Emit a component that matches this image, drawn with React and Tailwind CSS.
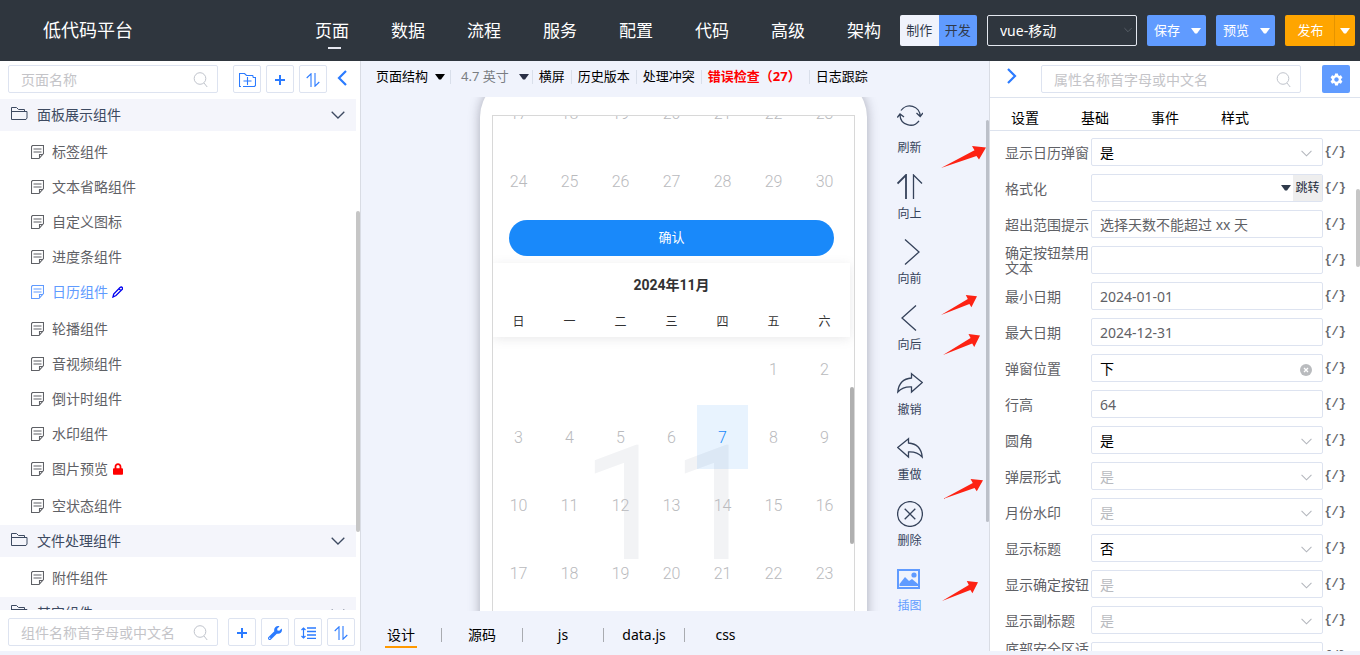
import clsx from 'clsx'
import { FaLock, FaWrench } from 'react-icons/fa'
import { MdSettings } from 'react-icons/md'

const NAV = ['页面', '数据', '流程', '服务', '配置', '代码', '高级', '架构']

const COMPONENT_GROUPS = [
  {
    title: '面板展示组件',
    items: [
      { name: '标签组件' },
      { name: '文本省略组件' },
      { name: '自定义图标' },
      { name: '进度条组件' },
      { name: '日历组件', active: true, mark: 'edit' },
      { name: '轮播组件' },
      { name: '音视频组件' },
      { name: '倒计时组件' },
      { name: '水印组件' },
      { name: '图片预览', mark: 'lock' },
      { name: '空状态组件' },
    ],
  },
  { title: '文件处理组件', items: [{ name: '附件组件' }] },
  { title: '其它组件', items: [] },
]

const WEEKDAYS = ['日', '一', '二', '三', '四', '五', '六']
const PREV_DAYS = [17, 18, 19, 20, 21, 22, 23, 24, 25, 26, 27, 28, 29, 30]
const MONTH_DAYS = [null, null, null, null, null, ...Array.from({ length: 30 }, (_, i) => i + 1)]

const PROPS = [
  { label: '显示日历弹窗', type: 'select', value: '是' },
  { label: '格式化', type: 'jump', value: '' },
  { label: '超出范围提示', type: 'text', value: '选择天数不能超过 xx 天' },
  { label: '确定按钮禁用文本', type: 'text', value: '' },
  { label: '最小日期', type: 'text', value: '2024-01-01' },
  { label: '最大日期', type: 'text', value: '2024-12-31' },
  { label: '弹窗位置', type: 'clear', value: '下' },
  { label: '行高', type: 'text', value: '64' },
  { label: '圆角', type: 'select', value: '是' },
  { label: '弹层形式', type: 'select', value: '是', muted: true },
  { label: '月份水印', type: 'select', value: '是', muted: true },
  { label: '显示标题', type: 'select', value: '否' },
  { label: '显示确定按钮', type: 'select', value: '是', muted: true },
  { label: '显示副标题', type: 'select', value: '是', muted: true },
  { label: '底部安全区适配', type: 'select', value: '是', muted: true },
]

function Caret({ className }) {
  return (
    <svg viewBox="0 0 10 6" className={clsx('h-[6px] w-[10px] shrink-0', className)} fill="currentColor">
      <path d="M0 0h10L6 5.6H4z" />
    </svg>
  )
}

function ChevronDown({ className }) {
  return (
    <svg viewBox="0 0 14 8" className={className} fill="none" stroke="currentColor" strokeWidth="1.3">
      <path d="M.7.7 7 7 13.3.7" />
    </svg>
  )
}

function SearchIcon() {
  return (
    <svg
      viewBox="0 0 16 16"
      className="pointer-events-none absolute top-[7px] right-[9px] size-4 text-[#c0c4cc]"
      fill="none"
      stroke="currentColor"
    >
      <circle cx="7" cy="6.5" r="5.8" />
      <path d="m11 11 3.2 4" />
    </svg>
  )
}

function FolderIcon() {
  return (
    <svg viewBox="0 0 17 14" className="mb-0.5 h-[14px] w-[17px] shrink-0" fill="none" stroke="currentColor">
      <path d="M.5 12.5V.5h5l2 2h6v2M.5 4.5H8M7.5 4.5h8.5v6.5l-1 1.500H.5" />
    </svg>
  )
}

function NoteIcon() {
  return (
    <svg viewBox="0 0 13 14" className="h-[14px] w-[13px] shrink-0" fill="none" stroke="currentColor" strokeWidth="1.1">
      <path d="M1.500.5h11v8l-4.500 5H.5V1.500zM2.500 4h8M2.500 7h8M12 9.500H8.500V13" />
    </svg>
  )
}

function PencilIcon() {
  return (
    <svg viewBox="0 0 11 12" className="ml-1 h-3 w-[11px]" fill="none" stroke="#0000f0" strokeWidth="1.3">
      <path d="M1 11l.7-3L8 1.500q1.500-1 2.300.2T9.500 4L4 9.500zM6.800 2.800l2.400 2" />
    </svg>
  )
}

function SortIcon() {
  return (
    <svg viewBox="0 0 14 14" className="size-[14px]" fill="none" stroke="currentColor" strokeWidth="1.1">
      <path d="M.7 5 5 .8V14M9 0v13.200L13.300 9" />
    </svg>
  )
}

function LineHeightIcon() {
  return (
    <svg viewBox="0 0 15 12" className="h-3 w-[15px]" fill="none" stroke="currentColor" strokeWidth="1.2">
      <path d="M2.500 1v10M.5 3l2-2 2 2M.5 9l2 2 2-2" />
      <path d="M6 1h9M6 4.500h9M6 8h9M6 11.400h9" strokeWidth="1.400" />
    </svg>
  )
}

function PlusIcon() {
  return (
    <svg viewBox="0 0 10 10" className="size-[10px]" stroke="currentColor" strokeWidth="2">
      <path d="M5 0v10M0 5h10" />
    </svg>
  )
}

function FolderPlusIcon() {
  return (
    <svg viewBox="0 0 17 14" className="h-[14px] w-[17px]" fill="none" stroke="currentColor" strokeWidth="1.1">
      <path d="M2 13.500H.5V.5h5l2 2h6.500M16.500 4v8.500l-1 1H4M14 2.500v2M16.500 4.500H14M8.500 4v8M4.500 8h8" />
    </svg>
  )
}

function IconButton({ label, children }) {
  return (
    <button
      type="button"
      aria-label={label}
      className="flex size-7 shrink-0 items-center justify-center rounded-xs border border-[#dde3f0] bg-white pt-0.5 text-[#2b7bff]"
    >
      {children}
    </button>
  )
}

function SearchBox({ placeholder, className }) {
  return (
    <div className={clsx('relative', className)}>
      <input
        type="text"
        aria-label={placeholder}
        placeholder={placeholder}
        className="h-7 w-full rounded-xs border border-[#dde3f0] bg-white pr-8 pl-3 text-[14px] placeholder:text-[#c4c4c8]"
      />
      <SearchIcon />
    </div>
  )
}

function SplitButton({ label }) {
  return (
    <button
      type="button"
      className="flex h-[31px] w-[59px] items-center justify-between rounded-xs bg-[#609bff] pr-[5px] pl-[7px] text-[13px] text-white"
    >
      {label}
      <Caret />
    </button>
  )
}

function Header() {
  return (
    <header className="flex h-[61px] shrink-0 items-center bg-[#2f363e] pr-[5px] text-white">
      <h1 className="w-[315px] shrink-0 pl-[43px] text-[18px]">低代码平台</h1>
      <nav className="flex gap-[42px] text-[17px]">
        {NAV.map((name, i) => (
          <a key={name} href="#" className="relative leading-7 whitespace-nowrap">
            {name}
            {i === 0 && <span className="absolute -bottom-1 left-[13px] h-0.5 w-[13px] bg-[#e6e8f0]" />}
          </a>
        ))}
      </nav>
      <div className="ml-auto flex gap-[10px]">
        <div className="flex h-[31px] w-[77px] overflow-hidden rounded-xs text-[13px] text-[#303a4b]">
          <button type="button" className="flex-1 bg-[#f0f3fc]">
            制作
          </button>
          <button type="button" className="flex-1 bg-[#609bff]">
            开发
          </button>
        </div>
        <div className="relative">
          <select
            aria-label="项目类型"
            className="h-[31px] w-[150px] appearance-none rounded-xs border border-[#e4e8f0] bg-transparent px-3 text-[14px] text-white"
          >
            <option>vue-移动</option>
          </select>
          <ChevronDown className="pointer-events-none absolute top-3 right-[5px] h-[6px] w-2 text-[#666d75]" />
        </div>
        <SplitButton label="保存" />
        <SplitButton label="预览" />
        <div className="flex h-[31px] w-[70px] rounded-xs bg-[#ffa500] text-[13px] text-white">
          <button type="button" className="flex-1 border-r border-[#e59400] pl-0.5">
            发布
          </button>
          <button type="button" aria-label="更多发布" className="flex w-5 items-center justify-center">
            <Caret />
          </button>
        </div>
      </div>
    </header>
  )
}

function ComponentGroup({ title, items }) {
  return (
    <section>
      <h2 className="flex h-8 items-center bg-[#f4f5fb] pr-[11px] pb-px pl-[11px] text-[14px] text-[#3d4a61]">
        <FolderIcon />
        <span className="ml-[9px] flex-1">{title}</span>
        <ChevronDown className="h-2 w-[14px]" />
      </h2>
      {items.length > 0 && (
        <ul className="pt-[3px] pb-0.5">
          {items.map((item) => (
            <li key={item.name} className={item.mark ? 'h-[37px]' : 'h-[35px]'}>
              <a
                href="#"
                className={clsx(
                  'flex h-[35px] items-center pl-[31px] text-[14px]',
                  item.active ? 'text-[#609bff]' : 'text-[#5f6166]',
                )}
              >
                <NoteIcon />
                <span className="ml-2">{item.name}</span>
                {item.mark === 'edit' && <PencilIcon />}
                {item.mark === 'lock' && <FaLock className="ml-[5px] h-3 w-[10px] text-[#ff0000]" />}
              </a>
            </li>
          ))}
        </ul>
      )}
    </section>
  )
}

function ComponentPanel() {
  return (
    <aside className="mb-1 flex w-[361px] shrink-0 flex-col border-r border-[#d9dce4] bg-white">
      <div className="flex h-[38px] shrink-0 gap-[5px] pt-1 pl-2">
        <SearchBox placeholder="页面名称" className="mr-[10px] w-[210px]" />
        <IconButton label="新建文件夹">
          <FolderPlusIcon />
        </IconButton>
        <IconButton label="新建页面">
          <PlusIcon />
        </IconButton>
        <IconButton label="排序">
          <SortIcon />
        </IconButton>
        <button type="button" aria-label="收起" className="flex h-[26px] w-5 justify-center pt-[5px] text-[#2b7bff]">
          <svg viewBox="0 0 10 16" className="h-4 w-[10px]" fill="none" stroke="currentColor" strokeWidth="2.2">
            <path d="M9 1 2 8l7 7" />
          </svg>
        </button>
      </div>
      <div className="flex min-h-0 flex-1">
        <div className="flex-1 overflow-hidden">
          {COMPONENT_GROUPS.map((group) => (
            <ComponentGroup key={group.title} {...group} />
          ))}
        </div>
        <div className="w-1 pt-28">
          <div className="h-[321px] rounded-xs bg-[#c6c6c6]" />
        </div>
      </div>
      <div className="flex h-[41px] shrink-0 items-start gap-[5px] pt-2 pl-2">
        <SearchBox placeholder="组件名称首字母或中文名" className="mr-[5px] w-[210px]" />
        <IconButton label="新建组件">
          <PlusIcon />
        </IconButton>
        <IconButton label="维护">
          <FaWrench className="size-[14px]" />
        </IconButton>
        <IconButton label="行高">
          <LineHeightIcon />
        </IconButton>
        <IconButton label="组件排序">
          <SortIcon />
        </IconButton>
      </div>
    </aside>
  )
}

function Divider() {
  return <span className="h-[14px] w-px shrink-0 bg-[#d9dfea]" />
}

function CanvasToolbar() {
  return (
    <div className="flex h-9 shrink-0 items-center pb-1 pl-[15px] text-[13px] whitespace-nowrap text-black">
      <button type="button" className="mr-[5px] flex items-center gap-[7px]">
        页面结构
        <Caret />
      </button>
      <Divider />
      <button type="button" className="mr-[3px] ml-[10px] flex items-center gap-[10px] text-[#7a7d82]">
        4.7 英寸
        <Caret className="text-[#2a2f45]" />
      </button>
      <Divider />
      <button type="button" className="mx-[6px]">横屏</button>
      <Divider />
      <button type="button" className="mx-[6px]">历史版本</button>
      <Divider />
      <button type="button" className="mx-[6px]">处理冲突</button>
      <Divider />
      <a href="#" className="mr-[8px] ml-[6px] font-bold text-[#ff0000]">
        错误检查（27）
      </a>
      <Divider />
      <button type="button" className="mx-[6px]">日志跟踪</button>
    </div>
  )
}

function Phone() {
  return (
    <div className="-mt-5 flex flex-col overflow-visible rounded-t-[40px] bg-white px-3 pt-[38px] shadow-[0_0_12px_rgba(60,60,80,0.4)]">
      <div className="flex min-h-0 flex-1 overflow-hidden border border-b-0 border-[#d8d8d8] font-['Roboto','Noto_Sans_CJK_SC',sans-serif]">
        <div className="flex-1">
          <div className="-mt-[35px] grid grid-cols-7 gap-y-1 text-[16px] font-light text-[#b9babd]">
            {PREV_DAYS.map((day) => (
              <div key={day} className="flex h-16 items-center justify-center pt-0.5">
                {day}
              </div>
            ))}
          </div>
          <div className="px-4 py-[7px]">
            <button type="button" className="h-9 w-full rounded-full bg-[#1989fa] text-[13px] text-white">
              确认
            </button>
          </div>
          <div className="shadow-[0_2px_10px_rgba(125,126,128,0.16)]">
            <h3 className="text-center text-[14px] leading-[44px] font-bold text-[#323233]">2024年11月</h3>
            <div className="grid grid-cols-7 text-center text-[12px] leading-[30px] text-[#323233]">
              {WEEKDAYS.map((name) => (
                <span key={name}>{name}</span>
              ))}
            </div>
          </div>
          <div className="relative grid grid-cols-7 gap-y-1 text-[16px] font-light text-[#b9babd]">
            <span className="absolute inset-0 flex items-center justify-center text-[160px] leading-none font-normal text-[#f2f3f5]">
              11
            </span>
            {MONTH_DAYS.map((day, i) => (
              <div
                key={i}
                className={clsx(
                  'relative flex h-16 items-center justify-center pt-0.5',
                  day === 7 && 'bg-[#1989fa]/10 text-[#1989fa]',
                )}
              >
                {day}
              </div>
            ))}
          </div>
        </div>
        <div className="w-1 pt-[271px]">
          <div className="h-[157px] rounded-xs bg-[#b0b0b0]" />
        </div>
      </div>
    </div>
  )
}

const TOOLS = [
  {
    label: '刷新',
    tall: true,
    icon: <path d="M4 7.500A10.500 10.500 0 0 1 23.200 13M19.500 10l3.700 3.500L26 10M3 12A10.500 10.500 0 0 0 22 17.800M.3 14.500 3 11l4 3" />,
  },
  {
    label: '向上',
    icon: (
      <>
        <path d="M.5 9.500 9 1v24" strokeWidth="1.8" />
        <path d="M16.500 25V1L25 9.500" />
      </>
    ),
  },
  { label: '向前', icon: <path d="M8 .5 22 13 8 25.500" /> },
  { label: '向后', icon: <path d="M19 .5 5 13l14 12.500" /> },
  { label: '撤销', icon: <path d="M14.500 3.700 25.300 12.500 14.500 22v-5Q6 16.500.8 22 2 9 14.500 8z" /> },
  { label: '重做', icon: <path d="M11.500 3.700.7 12.500 11.500 22v-5q8.500-.5 13.700 5Q24 9 11.500 8z" /> },
  {
    label: '删除',
    icon: (
      <>
        <circle cx="13" cy="13" r="12.400" />
        <path d="m7.700 7.700 10.600 10.600M18.300 7.700 7.700 18.300" />
      </>
    ),
  },
  {
    label: '插图',
    active: true,
    icon: (
      <>
        <path d="M1 4h21v18H1z" strokeWidth="2" />
        <path d="M2.500 20v-2L8 11l4 4 3-2 6 5v2z" fill="currentColor" stroke="none" />
        <circle cx="17" cy="9" r="2.600" fill="currentColor" stroke="none" />
      </>
    ),
  },
]

function CanvasTools() {
  return (
    <div className="grid h-[523px] w-[45px] grid-rows-8">
      {TOOLS.map((tool) => (
        <button
          key={tool.label}
          type="button"
          className={clsx(
            'flex flex-col items-center justify-end gap-[6px] pb-[9px] text-[12px] leading-4',
            tool.active ? 'text-[#609bff]' : 'text-[#35425a]',
          )}
        >
          <svg
            viewBox={tool.tall ? '0 0 26 31' : '0 0 26 26'}
            className={clsx('w-[26px] shrink-0', tool.tall ? 'h-[31px]' : 'h-[26px]')}
            fill="none"
            stroke="currentColor"
            strokeWidth="1.3"
          >
            {tool.icon}
          </svg>
          {tool.label}
        </button>
      ))}
    </div>
  )
}

// Hint arrows pinned on the canvas, each pointing at a property on the right.
const HINTS = [
  'top-[49px] right-[3px] w-[45px] h-[22px]',
  'top-[198px] right-[12px] w-[36px] h-[20px]',
  'top-[237px] right-[9px] w-[37px] h-[21px]',
  'top-[382px] right-[6px] w-[40px] h-[20px]',
  'top-[484px] right-[11px] w-[36px] h-[20px]',
]

function Canvas() {
  return (
    <div className="relative flex min-h-0 flex-1 overflow-hidden">
      <div className="grid flex-1 grid-cols-[1fr_387px_1fr]">
        <div />
        <Phone />
        <div className="pt-[3px] pl-5">
          <CanvasTools />
        </div>
      </div>
      <div className="w-[3px] pt-[23px]">
        <div className="h-[402px] rounded-xs bg-[#bcc0c9]" />
      </div>
      {HINTS.map((place) => (
        <svg
          key={place}
          viewBox="0 0 45 22"
          preserveAspectRatio="none"
          className={clsx('absolute text-[#fd2213]', place)}
          fill="currentColor"
        >
          <path d="M0 22 33.500 4.300 31 0 45 1.500 38 13.500 35.500 10z" />
        </svg>
      ))}
    </div>
  )
}

const FILE_TABS = ['设计', '源码', 'js', 'data.js', 'css']

function FileTabs() {
  return (
    <div className="flex h-11 shrink-0 items-center pt-1 text-[14px] text-black">
      {FILE_TABS.map((name, i) => (
        <div key={name} className="flex w-[81px] items-center">
          <button type="button" className="relative flex-1 leading-6">
            {name}
            {i === 0 && <span className="absolute -bottom-px left-6 h-0.5 w-8 bg-[#ff9900]" />}
          </button>
          {i < FILE_TABS.length - 1 && <span className="h-[14px] w-px bg-[#a9abb0]" />}
        </div>
      ))}
    </div>
  )
}

function PropField({ id, type, value, muted }) {
  const base = 'h-7 w-full rounded-xs border border-[#dde3f0] bg-white px-2 text-[14px]'

  if (type === 'select') {
    return (
      <div className="relative">
        <select id={id} className={clsx(base, 'appearance-none', muted ? 'text-[#b9bbc0]' : 'text-black')}>
          <option>{value}</option>
        </select>
        <ChevronDown className="pointer-events-none absolute top-[12px] right-[11px] h-[7px] w-[11px] text-[#b2b5bc]" />
      </div>
    )
  }

  if (type === 'clear') {
    return (
      <div className="relative">
        <input id={id} type="text" defaultValue={value} className={clsx(base, 'text-black')} />
        <button type="button" aria-label="清空" className="absolute top-[10px] right-[11px]">
          <svg viewBox="0 0 12 12" className="size-3">
            <circle cx="6" cy="6" r="6" fill="#b9bbbe" />
            <path d="m4 4 4 4M8 4 4 8" stroke="white" strokeWidth="1.300" />
          </svg>
        </button>
      </div>
    )
  }

  if (type === 'jump') {
    return (
      <div className="flex h-7 items-center overflow-hidden rounded-xs border border-[#dde3f0]">
        <input id={id} type="text" defaultValue={value} className="h-full min-w-0 flex-1 px-2 text-[14px]" />
        <Caret className="text-[#2f3a4b]" />
        <button type="button" className="ml-0.5 h-full w-[29px] bg-[#eeeeee] text-[12px] text-[#1f2b3c]">
          跳转
        </button>
      </div>
    )
  }

  return <input id={id} type="text" defaultValue={value} className={clsx(base, 'text-[#5f6166]')} />
}

function PropertyPanel() {
  return (
    <aside className="mb-1 flex w-[371px] shrink-0 flex-col border-l border-[#d9dce4] bg-white">
      <div className="flex h-[37px] shrink-0 items-start border-b border-[#dde3ee] pt-1 pr-[10px] pl-[17px]">
        <button type="button" aria-label="展开" className="w-[34px] pt-[3px] text-[#2b7bff]">
          <svg viewBox="0 0 10 16" className="h-4 w-[10px]" fill="none" stroke="currentColor" strokeWidth="2.2">
            <path d="m1 1 7 7-7 7" />
          </svg>
        </button>
        <SearchBox placeholder="属性名称首字母或中文名" className="w-[260px]" />
        <button
          type="button"
          aria-label="设置"
          className="ml-auto flex size-7 items-center justify-center rounded-xs bg-[#609bff] text-white"
        >
          <MdSettings className="size-[15px]" />
        </button>
      </div>
      <div className="flex h-[33px] shrink-0 items-end border-b border-[#dde3ee] text-[14px] text-black">
        {['设置', '基础', '事件', '样式'].map((tab) => (
          <button key={tab} type="button" className="w-[70px] leading-6">
            {tab}
          </button>
        ))}
      </div>
      <div className="flex min-h-0 flex-1">
        <form className="flex-1 overflow-hidden pt-[3px] pr-[10px] pl-[15px]">
          {PROPS.map((prop, i) => (
            <div key={prop.label} className="flex h-9 items-center">
              <label htmlFor={`prop-${i}`} className="w-[86px] shrink-0 text-[14px] leading-[15px] text-[#5f6166]">
                {prop.label}
              </label>
              <div className="min-w-0 flex-1">
                <PropField id={`prop-${i}`} {...prop} />
              </div>
              <button
                type="button"
                aria-label="绑定变量"
                className="w-[23px] text-right font-['Liberation_Mono',monospace] text-[12px] font-bold text-[#66686d]"
              >
                {'{/}'}
              </button>
            </div>
          ))}
        </form>
        <div className="w-1 pt-[58px]">
          <div className="h-[78px] rounded-xs bg-[#c6c6c6]" />
        </div>
      </div>
    </aside>
  )
}

export default function App() {
  return (
    <div className="flex h-screen flex-col overflow-hidden bg-[#f0f3fc] font-['Noto_Sans','Noto_Sans_CJK_SC',sans-serif]">
      <Header />
      <div className="flex min-h-0 flex-1">
        <ComponentPanel />
        <main className="flex min-w-0 flex-1 flex-col">
          <CanvasToolbar />
          <Canvas />
          <FileTabs />
        </main>
        <PropertyPanel />
      </div>
    </div>
  )
}
